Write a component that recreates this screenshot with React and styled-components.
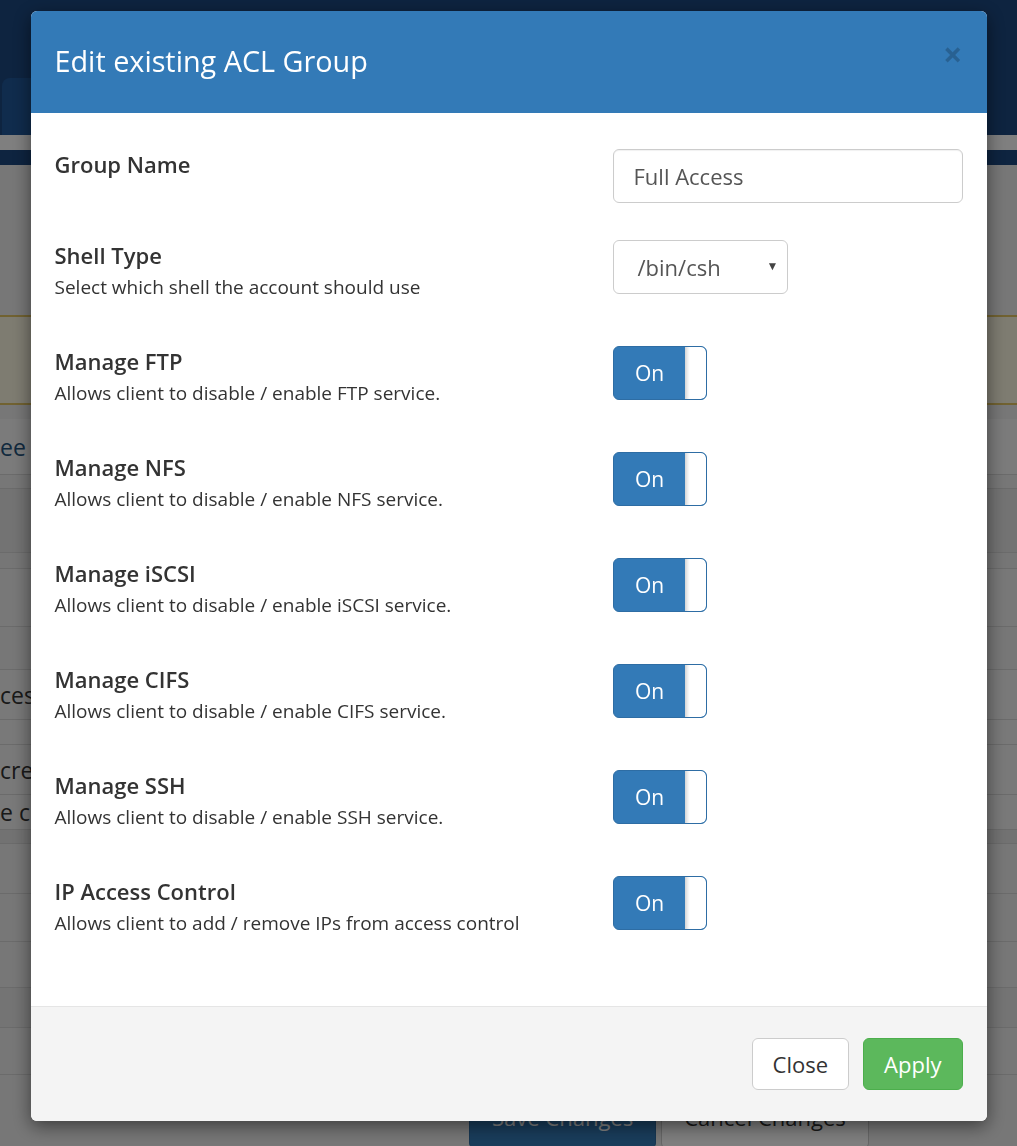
import React from 'react';
import styled, { createGlobalStyle } from 'styled-components';

const GlobalStyle = createGlobalStyle`
  html, body {
    margin: 0;
    padding: 0;
  }
  body {
    font-family: 'Open Sans', 'Liberation Sans', sans-serif;
    color: #333;
    background: #eeeeee;
  }
  * {
    box-sizing: border-box;
  }
`;

/* ---------- page behind the dialog ---------- */

const Page = styled.div`
  min-height: 1146px;
  overflow: hidden;
`;

const TopNav = styled.div`
  height: 78px;
  background: #1c4880;
`;

const TabBar = styled.div`
  height: 57px;
  background: #1c4880;
  display: flex;
  align-items: flex-end;
  padding-left: 2px;
`;

const Tab = styled.div`
  width: 90px;
  height: 57px;
  background: #20589a;
  border-radius: 8px 8px 0 0;
`;

const Strip = styled.div`
  height: 15px;
  background: ${p => p.$dark ? '#1c4880' : '#ffffff'};
`;

const Spacer = styled.div`
  height: ${p => p.$h}px;
  background: #eeeeee;
`;

const Alert = styled.div`
  height: 90px;
  background: #fcf8e3;
  border-top: 2px solid #e2c463;
  border-bottom: 2px solid #e2c463;
`;

const PanelRow = styled.div`
  height: ${p => p.$h}px;
  background: ${p => p.$bg || '#f0f0f0'};
  border-bottom: 1px solid #d6d6d6;
  display: flex;
  align-items: center;
`;

/* only the left edge of each cell shows beside the dialog */
const PanelCell = styled.div`
  width: 36px;
  overflow: hidden;
  white-space: nowrap;
  font-size: 23px;
  line-height: 30px;
  color: ${p => p.$link ? '#23527c' : '#333'};
`;

const ActionBar = styled.div`
  display: flex;
  gap: 5px;
  padding: 10px 0 0 469px;
`;

const PageButton = styled.div`
  height: 64px;
  padding: 0 22px;
  display: flex;
  align-items: center;
  font-size: 22px;
  border-radius: 6px;
  border: 1px solid ${p => p.$primary ? '#2e6da4' : '#cccccc'};
  background: ${p => p.$primary ? '#337ab7' : '#ffffff'};
  color: ${p => p.$primary ? '#ffffff' : '#333'};
`;

const panelRows = [
  { h: 56, bg: '#f7f7f7', text: 'ee D', link: true },
  { h: 14, bg: '#eeeeee' },
  { h: 64, bg: '#e6e6e6' },
  { h: 16, bg: '#ececec' },
  { h: 58, bg: '#f0f0f0' },
  { h: 43, bg: '#eeeeee' },
  { h: 50, bg: '#f2f2f2', text: 'ces' },
  { h: 25, bg: '#f2f2f2' },
  { h: 50, bg: '#f2f2f2', text: 'cre' },
  { h: 35, bg: '#f2f2f2', text: 'e cr' },
  { h: 14, bg: '#e4e4e4' },
  { h: 50, bg: '#eeeeee' },
  { h: 48, bg: '#eeeeee' },
  { h: 46, bg: '#eeeeee' },
  { h: 40, bg: '#e8e8e8' },
  { h: 47, bg: '#eeeeee' },
];

/* ---------- dialog ---------- */

const Overlay = styled.div`
  position: fixed;
  inset: 0;
  background: rgba(0, 0, 0, 0.5);
  display: flex;
  justify-content: center;
  align-items: flex-start;
  padding-top: 11px;
`;

const Modal = styled.div`
  width: 956px;
  background: #fff;
  border-radius: 6px;
  overflow: hidden;
  box-shadow: 0 5px 18px rgba(0, 0, 0, 0.5);
`;

const Header = styled.div`
  height: 102px;
  background: #337ab7;
  padding: 0 24px;
  display: flex;
  align-items: center;
  justify-content: space-between;
`;

const Title = styled.h4`
  margin: 0 0 4px;
  font-size: 28.8px;
  font-weight: 400;
  color: #fff;
`;

const CloseX = styled.span`
  font-size: 34px;
  font-weight: 700;
  line-height: 1;
  color: rgba(0, 0, 0, 0.2);
  margin-top: -16px;
`;

const Body = styled.div`
  padding: 36px 24px 24px;
`;

const Row = styled.div`
  display: grid;
  grid-template-columns: 558px 1fr;
  margin-bottom: 37px;
`;

const LabelBlock = styled.div`
  display: flex;
  flex-direction: column;
`;

const Label = styled.div`
  font-size: 22px;
  font-weight: 600;
  line-height: 31px;
`;

const Hint = styled.div`
  font-size: 19px;
  line-height: 26px;
  margin-top: 3px;
  padding-bottom: 9px;
`;

const TextInput = styled.input`
  width: 100%;
  height: 54px;
  border: 1px solid #cccccc;
  border-radius: 6px;
  padding: 0 20px;
  font-family: inherit;
  font-size: 22px;
  color: #555;
  background: #fff;
  box-shadow: inset 0 1px 1px rgba(0, 0, 0, 0.06);
  outline: none;
`;

const SelectBox = styled.div`
  width: 175px;
  height: 54px;
  border: 1px solid #cccccc;
  border-radius: 6px;
  padding: 0 8px 0 24px;
  display: flex;
  align-items: center;
  justify-content: space-between;
  font-size: 22px;
  color: #555;
  background: #fff;
`;

const Caret = styled.span`
  font-size: 12px;
  color: #444;
  margin-bottom: 4px;
`;

const Toggle = styled.div`
  width: 94px;
  height: 54px;
  border: 1px solid #2e6da4;
  border-radius: 6px;
  background: #337ab7;
  display: flex;
  overflow: hidden;
`;

const ToggleOn = styled.span`
  flex: 1;
  display: flex;
  align-items: center;
  justify-content: center;
  color: #fff;
  font-size: 21px;
  padding-left: 1px;
`;

const ToggleHandle = styled.span`
  width: 21px;
  background: linear-gradient(to right, #d4d4d4 0, #f2f2f2 3px, #fff 5px);
  border-radius: 0 5px 5px 0;
`;

const Footer = styled.div`
  height: 115px;
  background: #f4f4f4;
  border-top: 1px solid #e5e5e5;
  padding: 0 24px;
  display: flex;
  justify-content: flex-end;
  align-items: center;
  gap: 14px;
`;

const Button = styled.button`
  height: 52px;
  padding: 0 20px;
  font-family: inherit;
  font-size: 22px;
  border-radius: 6px;
  border: 1px solid ${p => p.$success ? '#4cae4c' : '#cccccc'};
  background: ${p => p.$success ? '#5cb85c' : '#ffffff'};
  color: ${p => p.$success ? '#ffffff' : '#333'};
  cursor: pointer;
`;

const services = [
  { id: 'ftp', title: 'Manage FTP', hint: 'Allows client to disable / enable FTP service.' },
  { id: 'nfs', title: 'Manage NFS', hint: 'Allows client to disable / enable NFS service.' },
  { id: 'iscsi', title: 'Manage iSCSI', hint: 'Allows client to disable / enable iSCSI service.' },
  { id: 'cifs', title: 'Manage CIFS', hint: 'Allows client to disable / enable CIFS service.' },
  { id: 'ssh', title: 'Manage SSH', hint: 'Allows client to disable / enable SSH service.' },
  { id: 'ip', title: 'IP Access Control', hint: 'Allows client to add / remove IPs from access control' },
];

const App = () => (
  <>
    <GlobalStyle />
    <Page>
      <TopNav />
      <TabBar>
        <Tab />
      </TabBar>
      <Strip />
      <Strip $dark />
      <Spacer $h={150} />
      <Alert />
      <Spacer $h={14} />
      {panelRows.map((row, i) => (
        <PanelRow key={i} $h={row.h} $bg={row.bg}>
          {row.text && <PanelCell $link={row.link}>{row.text}</PanelCell>}
        </PanelRow>
      ))}
      <ActionBar>
        <PageButton $primary>Save Changes</PageButton>
        <PageButton>Cancel Changes</PageButton>
      </ActionBar>
    </Page>

    <Overlay>
      <Modal>
        <Header>
          <Title>Edit existing ACL Group</Title>
          <CloseX>×</CloseX>
        </Header>
        <Body>
          <Row>
            <LabelBlock>
              <Label>Group Name</Label>
            </LabelBlock>
            <TextInput defaultValue="Full Access" />
          </Row>
          <Row>
            <LabelBlock>
              <Label>Shell Type</Label>
              <Hint>Select which shell the account should use</Hint>
            </LabelBlock>
            <SelectBox>
              <span>/bin/csh</span>
              <Caret>▼</Caret>
            </SelectBox>
          </Row>
          {services.map(s => (
            <Row key={s.id}>
              <LabelBlock>
                <Label>{s.title}</Label>
                <Hint>{s.hint}</Hint>
              </LabelBlock>
              <Toggle>
                <ToggleOn>On</ToggleOn>
                <ToggleHandle />
              </Toggle>
            </Row>
          ))}
        </Body>
        <Footer>
          <Button>Close</Button>
          <Button $success>Apply</Button>
        </Footer>
      </Modal>
    </Overlay>
  </>
);

export default App;
